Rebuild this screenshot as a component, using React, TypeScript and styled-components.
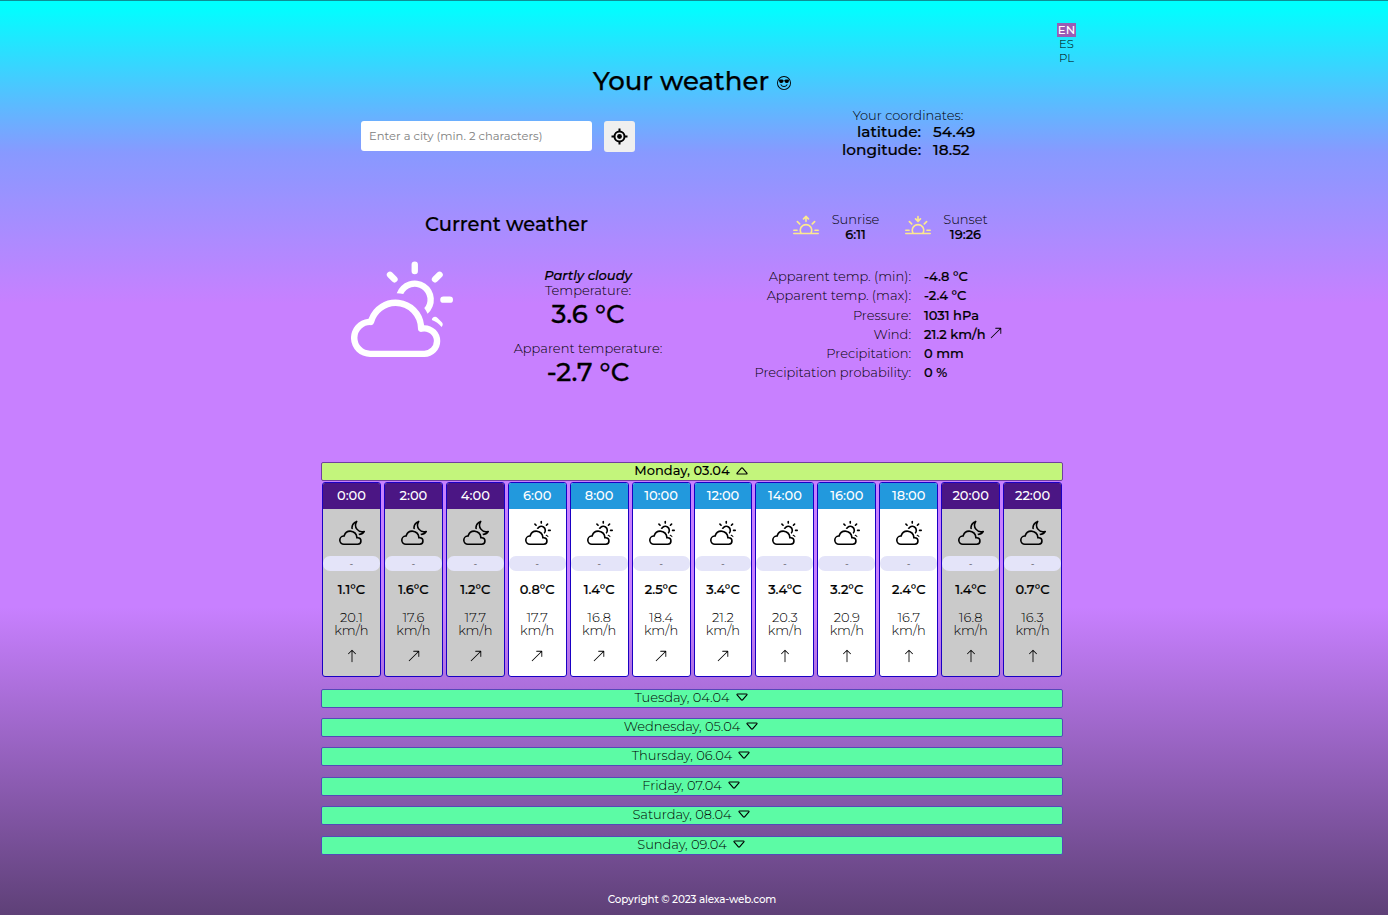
import React from 'react';
import styled, { createGlobalStyle } from 'styled-components';
import {
  BsArrowUp,
  BsArrowUpRight,
  BsCloudMoon,
  BsCloudSun,
  BsEmojiSunglasses,
  BsSunrise,
  BsSunset,
} from 'react-icons/bs';

const GlobalStyle = createGlobalStyle`
  * { box-sizing: border-box; }
  body {
    margin: 0;
    font-family: Montserrat, Inter, sans-serif;
    font-size: 13px;
    font-weight: 300;
    color: #000;
  }
  h1, h2, p, ul { margin: 0; padding: 0; }
  svg { display: block; flex: none; }
`;

const Page = styled.div`
  height: 915px;
  padding-right: 4px;
  overflow: hidden;
  border-top: 1px solid #0e8f96;
  background: linear-gradient(
    180deg,
    #00ffff 5px,
    #8899ff 152px,
    #c880ff 303px,
    #c880ff 606px,
    #5e4077 915px
  );
`;

const Container = styled.div`
  width: 742px;
  margin: 0 auto;
`;

const Languages = styled.ul`
  display: flex;
  flex-direction: column;
  align-items: center;
  width: 19px;
  margin: 0 -13px 0 auto;
  padding-top: 22px;
  list-style: none;
`;

const Language = styled.li<{ $active?: boolean }>`
  width: 19px;
  height: 14px;
  font-size: 11.7px;
  line-height: 14px;
  text-align: center;
  font-weight: ${(p) => (p.$active ? 500 : 300)};
  color: ${(p) => (p.$active ? '#fff' : '#000')};
  background: ${(p) => (p.$active ? '#9a5cb4' : 'transparent')};
`;

const Title = styled.h1`
  display: flex;
  align-items: center;
  justify-content: center;
  gap: 8px;
  height: 32px;
  padding-bottom: 1px;
  font-size: 26px;
  font-weight: 500;
  -webkit-text-stroke: 0.25px;
`;

const TitleIcon = styled(BsEmojiSunglasses)`
  width: 14px;
  height: 14px;
  margin-top: 4px;
`;

const Columns = styled.div`
  display: grid;
  grid-template-columns: 371px 371px;
`;

const SearchRow = styled(Columns)`
  height: 113px;
`;

const SearchForm = styled.form`
  display: flex;
  align-items: flex-start;
  gap: 12px;
  padding: 24px 0 0 40px;
`;

const CityInput = styled.input`
  width: 231px;
  height: 30px;
  padding: 0 8px;
  border: 0;
  border-radius: 3px;
  background: #fff;
  font: 400 11.55px Montserrat, Inter, sans-serif;
  &::placeholder { color: #808080; }
`;

const LocateButton = styled.button`
  display: flex;
  align-items: center;
  justify-content: center;
  width: 31px;
  height: 31px;
  padding: 0;
  border: 0;
  border-radius: 3px;
  background: #efefef;
  color: #000;
`;

const Coordinates = styled.div`
  padding: 11px 0 0 150px;
`;

const CoordinatesTitle = styled.p`
  width: 132px;
  height: 15px;
  line-height: 15px;
  text-align: center;
`;

const CoordinateRow = styled.div`
  display: grid;
  grid-template-columns: 79px auto;
  column-gap: 12px;
  height: 18px;
  font-size: 15.3px;
  font-weight: 500;
  line-height: 18px;
  white-space: nowrap;
  -webkit-text-stroke: 0.2px;
`;

const CoordinateName = styled.span`
  text-align: right;
`;

const CurrentHeader = styled(Columns)`
  height: 57px;
`;

const SectionTitle = styled.h2`
  font-size: 19.5px;
  font-weight: 500;
  line-height: 29px;
  text-align: center;
  -webkit-text-stroke: 0.2px;
`;

const SunTimes = styled.div`
  display: flex;
  align-items: flex-start;
  padding: 2px 0 0 101px;
`;

const SunTime = styled.div<{ $width: number }>`
  display: flex;
  width: ${(p) => p.$width}px;
  > svg {
    width: 26px;
    height: 26px;
    margin-top: 2px;
    color: #fde98e;
  }
`;

const SunText = styled.div`
  display: flex;
  flex: 1;
  flex-direction: column;
  align-items: center;
  max-width: 73px;
  line-height: 15px;
`;

const SunHour = styled.span`
  font-weight: 500;
  -webkit-text-stroke: 0.2px;
`;

const CurrentBody = styled(Columns)`
  height: 195px;
`;

const CurrentMain = styled.div`
  display: flex;
  padding-left: 30px;
`;

const CurrentIcon = styled(BsCloudSun)`
  width: 102px;
  height: 102px;
  margin-top: -12px;
  color: #fff;
`;

const CurrentReadings = styled.div`
  display: flex;
  flex: none;
  flex-direction: column;
  align-items: center;
  width: 270px;
  padding-top: 1px;
`;

const Description = styled.p`
  font-weight: 500;
  font-style: italic;
  line-height: 15px;
  -webkit-text-stroke: 0.2px;
`;

const ReadingLabel = styled.p`
  line-height: 15px;
`;

const ReadingValue = styled.p`
  height: 43px;
  font-size: 26px;
  font-weight: 500;
  line-height: 32px;
  -webkit-text-stroke: 0.3px;
`;

const Details = styled.div`
  padding-left: 50px;
`;

const DetailRow = styled.div`
  display: grid;
  grid-template-columns: 169px auto;
  column-gap: 13px;
  height: 19.25px;
  line-height: 19px;
  white-space: nowrap;
`;

const DetailLabel = styled.span`
  text-align: right;
`;

const DetailValue = styled.span`
  display: flex;
  gap: 3px;
  font-weight: 500;
  -webkit-text-stroke: 0.2px;
  > svg { margin-top: 1px; }
`;

const DayBar = styled.div<{ $open?: boolean }>`
  display: flex;
  align-items: center;
  justify-content: center;
  gap: 6px;
  height: 19px;
  padding-bottom: 2px;
  padding-right: 2px;
  border: 1px solid ${(p) => (p.$open ? '#7040a0' : '#5548b8')};
  border-radius: 2px;
  background: ${(p) => (p.$open ? '#c3f57c' : '#5cfba5')};
  font-weight: ${(p) => (p.$open ? 500 : 300)};
  line-height: 15px;
`;

const Caret = styled.svg<{ $up?: boolean }>`
  width: 12px;
  height: 8px;
  margin-top: ${(p) => (p.$up ? 0 : -1)}px;
  transform: ${(p) => (p.$up ? 'none' : 'rotate(180deg)')};
`;

const Hours = styled.div`
  display: grid;
  grid-template-columns: repeat(12, 1fr);
  gap: 3px;
  margin: 1px 1px 11.6px;
`;

const HourCard = styled.div<{ $night: boolean }>`
  display: flex;
  flex-direction: column;
  align-items: center;
  height: 195px;
  overflow: hidden;
  border: 1px solid #1a00c4;
  border-radius: 3px;
  background: ${(p) => (p.$night ? '#cacaca' : '#fff')};
`;

const HourTime = styled.div<{ $night: boolean }>`
  align-self: stretch;
  height: 26px;
  line-height: 25px;
  text-align: center;
  font-weight: 500;
  color: #fff;
  background: ${(p) => (p.$night ? '#4b1684' : '#2299dd')};
`;

const HourIcon = styled.div`
  height: 47px;
  padding: 10px 0 0 1px;
`;

const Rain = styled.div`
  align-self: stretch;
  height: 15px;
  border-radius: 7px;
  background: #e4e4f9;
  font-size: 10px;
  line-height: 15px;
  text-align: center;
`;

const HourTemp = styled.div`
  margin-top: 11px;
  font-weight: 500;
  line-height: 15px;
  -webkit-text-stroke: 0.2px;
`;

const HourWind = styled.div`
  width: 40px;
  height: 38px;
  margin-top: 14px;
  line-height: 13px;
  text-align: center;
`;

const WindArrow = styled.div`
  padding-left: 0.5px;
`;

const OtherDays = styled.div`
  display: grid;
  gap: 10.42px;
`;

const Footer = styled.footer`
  margin-top: 37.3px;
  font-size: 10.4px;
  font-weight: 500;
  line-height: 15px;
  letter-spacing: -0.15px;
  text-align: center;
  color: #fff;
`;

type Detail = { label: string; value: string; arrow?: boolean };

const details: Detail[] = [
  { label: 'Apparent temp. (min):', value: '-4.8 °C' },
  { label: 'Apparent temp. (max):', value: '-2.4 °C' },
  { label: 'Pressure:', value: '1031 hPa' },
  { label: 'Wind:', value: '21.2 km/h', arrow: true },
  { label: 'Precipitation:', value: '0 mm' },
  { label: 'Precipitation probability:', value: '0 %' },
];

type Hour = { time: string; temp: string; wind: string; up: boolean; night: boolean };

const hour = (time: string, temp: string, wind: string, up: boolean, night = false): Hour => ({
  time,
  temp,
  wind,
  up,
  night,
});

const hours: Hour[] = [
  hour('0:00', '1.1', '20.1', true, true),
  hour('2:00', '1.6', '17.6', false, true),
  hour('4:00', '1.2', '17.7', false, true),
  hour('6:00', '0.8', '17.7', false),
  hour('8:00', '1.4', '16.8', false),
  hour('10:00', '2.5', '18.4', false),
  hour('12:00', '3.4', '21.2', false),
  hour('14:00', '3.4', '20.3', true),
  hour('16:00', '3.2', '20.9', true),
  hour('18:00', '2.4', '16.7', true),
  hour('20:00', '1.4', '16.8', true, true),
  hour('22:00', '0.7', '16.3', true, true),
];

const otherDays = [
  'Tuesday, 04.04',
  'Wednesday, 05.04',
  'Thursday, 06.04',
  'Friday, 07.04',
  'Saturday, 08.04',
  'Sunday, 09.04',
];

const Triangle = ({ up }: { up?: boolean }) => (
  <Caret
    $up={up}
    viewBox="0 0 12 8"
    fill="none"
    stroke="currentColor"
    strokeWidth="1.15"
    strokeLinejoin="round"
  >
    <path d="M5.4 1.2 1.1 6.2c-.3.4-.1.8.4.8h9c.5 0 .7-.4.4-.8L6.6 1.2a.8.8 0 0 0-1.2 0Z" />
  </Caret>
);

const LocateIcon = () => (
  <svg width="17" height="17" viewBox="0 0 17 17" fill="none" stroke="currentColor" strokeWidth="2">
    <circle cx="8.5" cy="8.5" r="5" />
    <circle cx="8.5" cy="8.5" r="2.4" fill="currentColor" stroke="none" />
    <path d="M8.5.5v3M8.5 13.5v3M.5 8.5h3M13.5 8.5h3" />
  </svg>
);

export default function App() {
  return (
    <Page>
      <GlobalStyle />
      <Container>
        <Languages>
          <Language $active>EN</Language>
          <Language>ES</Language>
          <Language>PL</Language>
        </Languages>
        <Title>
          Your weather <TitleIcon />
        </Title>

        <SearchRow>
          <SearchForm>
            <CityInput placeholder="Enter a city (min. 2 characters)" />
            <LocateButton type="button" aria-label="Use my location">
              <LocateIcon />
            </LocateButton>
          </SearchForm>
          <Coordinates>
            <CoordinatesTitle>Your coordinates:</CoordinatesTitle>
            <CoordinateRow>
              <CoordinateName>latitude:</CoordinateName>
              <span>54.49</span>
            </CoordinateRow>
            <CoordinateRow>
              <CoordinateName>longitude:</CoordinateName>
              <span>18.52</span>
            </CoordinateRow>
          </Coordinates>
        </SearchRow>

        <CurrentHeader>
          <SectionTitle>Current weather</SectionTitle>
          <SunTimes>
            <SunTime $width={112}>
              <BsSunrise />
              <SunText>
                <span>Sunrise</span>
                <SunHour>6:11</SunHour>
              </SunText>
            </SunTime>
            <SunTime $width={95}>
              <BsSunset />
              <SunText>
                <span>Sunset</span>
                <SunHour>19:26</SunHour>
              </SunText>
            </SunTime>
          </SunTimes>
        </CurrentHeader>

        <CurrentBody>
          <CurrentMain>
            <CurrentIcon />
            <CurrentReadings>
              <Description>Partly cloudy</Description>
              <ReadingLabel>Temperature:</ReadingLabel>
              <ReadingValue>3.6 °C</ReadingValue>
              <ReadingLabel>Apparent temperature:</ReadingLabel>
              <ReadingValue>-2.7 °C</ReadingValue>
            </CurrentReadings>
          </CurrentMain>
          <Details>
            {details.map((d) => (
              <DetailRow key={d.label}>
                <DetailLabel>{d.label}</DetailLabel>
                <DetailValue>
                  {d.value}
                  {d.arrow && <BsArrowUpRight size={14} />}
                </DetailValue>
              </DetailRow>
            ))}
          </Details>
        </CurrentBody>

        <DayBar $open>
          Monday, 03.04 <Triangle up />
        </DayBar>
        <Hours>
          {hours.map((h) => (
            <HourCard key={h.time} $night={h.night}>
              <HourTime $night={h.night}>{h.time}</HourTime>
              <HourIcon>{h.night ? <BsCloudMoon size={26} /> : <BsCloudSun size={26} />}</HourIcon>
              <Rain>-</Rain>
              <HourTemp>{h.temp}°C</HourTemp>
              <HourWind>{h.wind} km/h</HourWind>
              <WindArrow>{h.up ? <BsArrowUp size={14} /> : <BsArrowUpRight size={14} />}</WindArrow>
            </HourCard>
          ))}
        </Hours>
        <OtherDays>
          {otherDays.map((name) => (
            <DayBar key={name}>
              {name} <Triangle />
            </DayBar>
          ))}
        </OtherDays>
        <Footer>Copyright © 2023 alexa-web.com</Footer>
      </Container>
    </Page>
  );
}
